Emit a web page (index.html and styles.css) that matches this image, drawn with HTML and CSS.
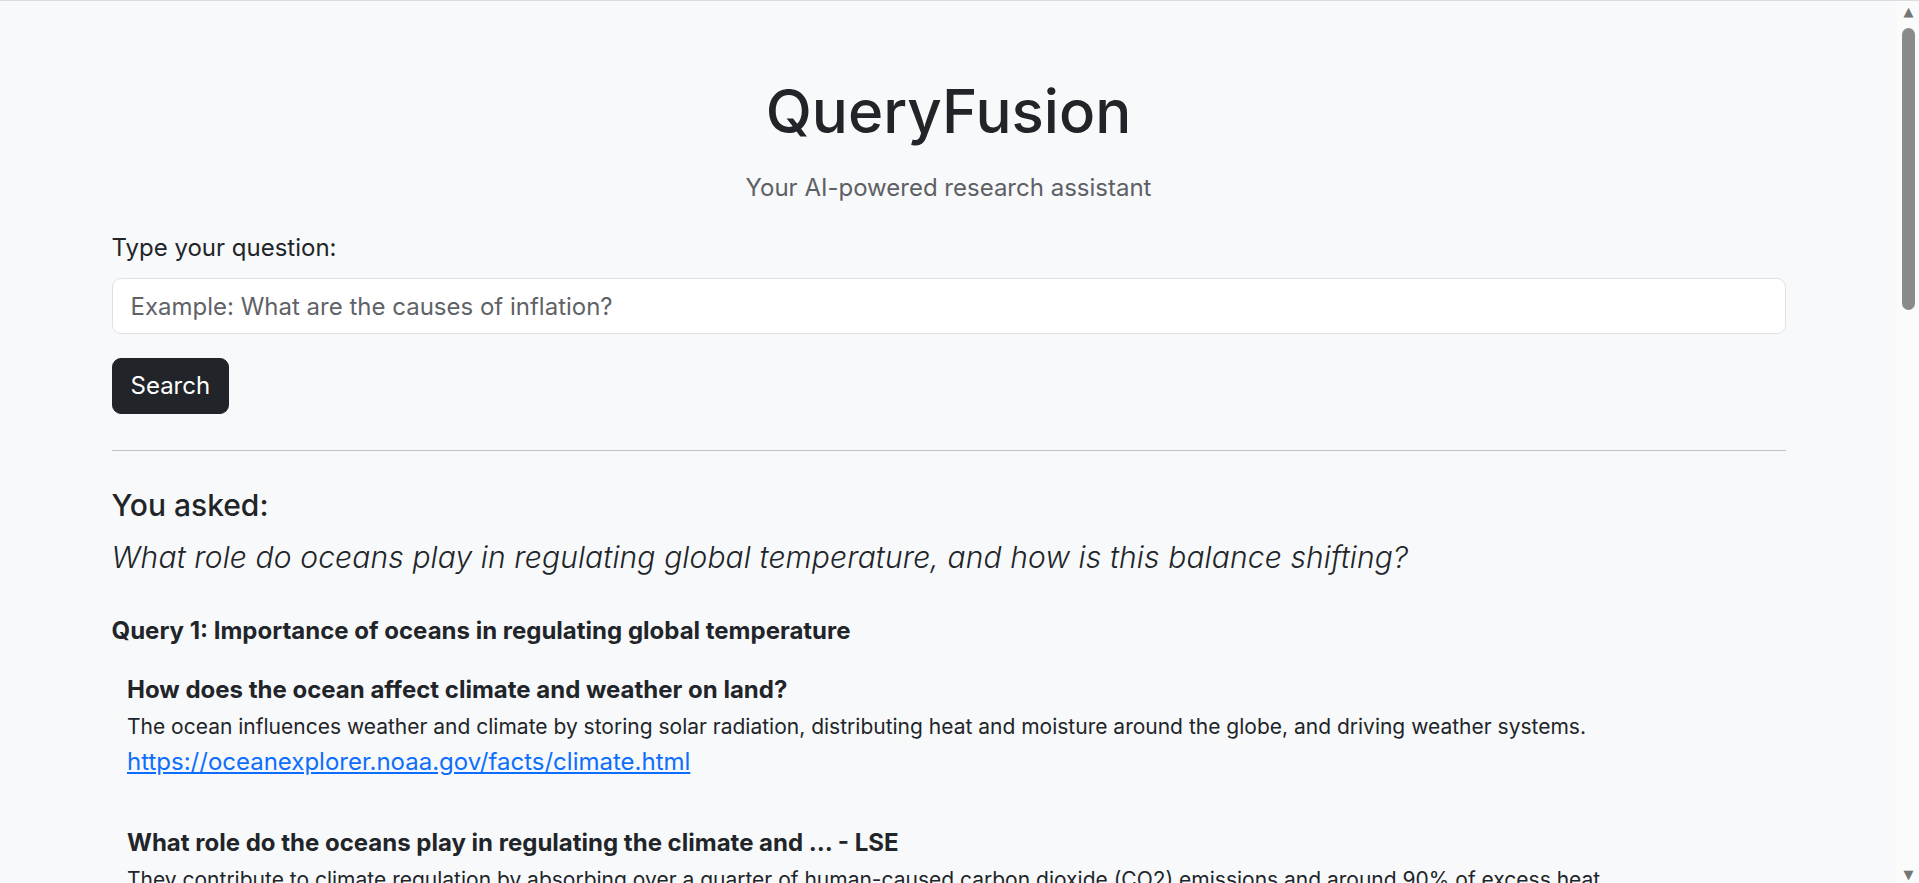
FILE: index.html
```html
<!DOCTYPE html>
<html lang="en">
<head>
<meta charset="utf-8">
<title>QueryFusion</title>
<link rel="stylesheet" href="styles.css">
</head>
<body>
<div class="viewport">
  <main class="container">
    <h1 class="title">QueryFusion</h1>
    <p class="subtitle">Your AI-powered research assistant</p>

    <form class="search-form">
      <label class="form-label" for="q">Type your question:</label>
      <input class="form-control" id="q" type="text" placeholder="Example: What are the causes of inflation?">
      <button class="btn-search" type="button">Search</button>
    </form>

    <hr class="divider">

    <h5 class="asked-label">You asked:</h5>
    <p class="asked-question">What role do oceans play in regulating global temperature, and how is this balance shifting?</p>

    <section class="query">
      <h6 class="query-title">Query 1: Importance of oceans in regulating global temperature</h6>

      <div class="result">
        <div class="result-title">How does the ocean affect climate and weather on land?</div>
        <p class="result-desc">The ocean influences weather and climate by storing solar radiation, distributing heat and moisture around the globe, and driving weather systems.</p>
        <a class="result-link" href="#">https://oceanexplorer.noaa.gov/facts/climate.html</a>
      </div>

      <div class="result">
        <div class="result-title">What role do the oceans play in regulating the climate and ... - LSE</div>
        <p class="result-desc">They contribute to climate regulation by absorbing over a quarter of human-caused carbon dioxide (CO2) emissions and around 90% of excess heat.</p>
        <a class="result-link" href="#">https://www.lse.ac.uk/granthaminstitute/explainers/what-role-do-the-oceans-play-in-regulating-the-climate/</a>
      </div>

      <div class="result">
        <div class="result-title">Ocean heat content and climate change</div>
        <p class="result-desc">Oceans store vast amounts of heat and release it slowly, moderating temperature extremes across seasons and regions.</p>
        <a class="result-link" href="#">https://www.climate.gov/news-features/understanding-climate/climate-change-ocean-heat-content</a>
      </div>
    </section>
  </main>
</div>
<aside class="scrollbar" aria-hidden="true">
  <span class="sb-arrow">▲</span>
  <div class="sb-thumb"></div>
  <div class="sb-spacer"></div>
  <span class="sb-arrow">▼</span>
</aside>
</body>
</html>
```

FILE: styles.css
```css
* { box-sizing: border-box; }

html, body {
  margin: 0;
  height: 100%;
  overflow: hidden;
}

body {
  display: flex;
  border-top: 1px solid #dcdde0;
  background: #f8f9fa;
  color: #212529;
  font-family: Inter, "Noto Sans", "Liberation Sans", sans-serif;
  font-size: 24px;
  line-height: 1.5;
}

.viewport {
  flex: 1;
  min-width: 0;
  overflow: hidden;
}

.container {
  width: 1674px;
  margin: 0 auto;
  padding-top: 74px;
}

.title {
  margin: 0 0 23px;
  font-size: 60px;
  font-weight: 500;
  line-height: 72px;
  text-align: center;
}

.subtitle {
  margin: 0 0 24px;
  color: #5d6064;
  line-height: 36px;
  text-align: center;
}

.search-form {
  display: flex;
  flex-direction: column;
  align-items: flex-start;
}

.form-label {
  display: block;
  margin-bottom: 12px;
  line-height: 36px;
}

.form-control {
  display: block;
  width: 100%;
  height: 56px;
  margin: 0 0 24px;
  padding: 9px 18px;
  border: 1px solid #dee2e6;
  border-radius: 9px;
  background: #fff;
  color: #212529;
  font-family: inherit;
  font-size: 24px;
  line-height: 36px;
  outline: none;
}

.form-control::placeholder {
  color: #5f6266;
  opacity: 1;
}

.btn-search {
  height: 56px;
  padding: 0 18px;
  border: 1px solid #212529;
  border-radius: 9px;
  background: #212529;
  color: #fff;
  font-family: inherit;
  font-size: 24px;
  line-height: 36px;
}

.divider {
  margin: 36px 0;
  border: 0;
  border-top: 1px solid #bfc1c3;
}

.asked-label {
  margin: 0 0 12px;
  font-size: 30px;
  font-weight: 500;
  line-height: 36px;
}

.asked-question {
  margin: 0 0 36px;
  font-size: 30px;
  font-weight: 300;
  font-style: italic;
  letter-spacing: 0.13px;
  line-height: 45px;
}

.query-title {
  margin: 0 0 30px;
  font-size: 24px;
  font-weight: 700;
  line-height: 29px;
}

.result {
  padding-left: 15.5px;
  margin-bottom: 48px;
}

.result-title {
  margin-bottom: 5px;
  font-size: 24px;
  font-weight: 700;
  line-height: 29px;
}

.result-desc {
  margin: 0;
  font-size: 21px;
  line-height: 35px;
}

.result-link {
  display: inline-block;
  color: #0d6efd;
  line-height: 36px;
  text-decoration: underline;
}

.scrollbar {
  width: 22px;
  flex: none;
  display: flex;
  flex-direction: column;
  align-items: center;
  padding: 4px 0 1px 1px;
  background: #fbfbfb;
}

.sb-arrow {
  flex: none;
  display: block;
  height: 14px;
  color: #757575;
  font-family: "DejaVu Sans", sans-serif;
  font-size: 13px;
  line-height: 14px;
}

.sb-thumb {
  flex: none;
  width: 13px;
  height: 282px;
  margin-top: 9px;
  border-radius: 7px;
  background: #8a8a8a;
}

.sb-spacer {
  flex: 1;
}
```
